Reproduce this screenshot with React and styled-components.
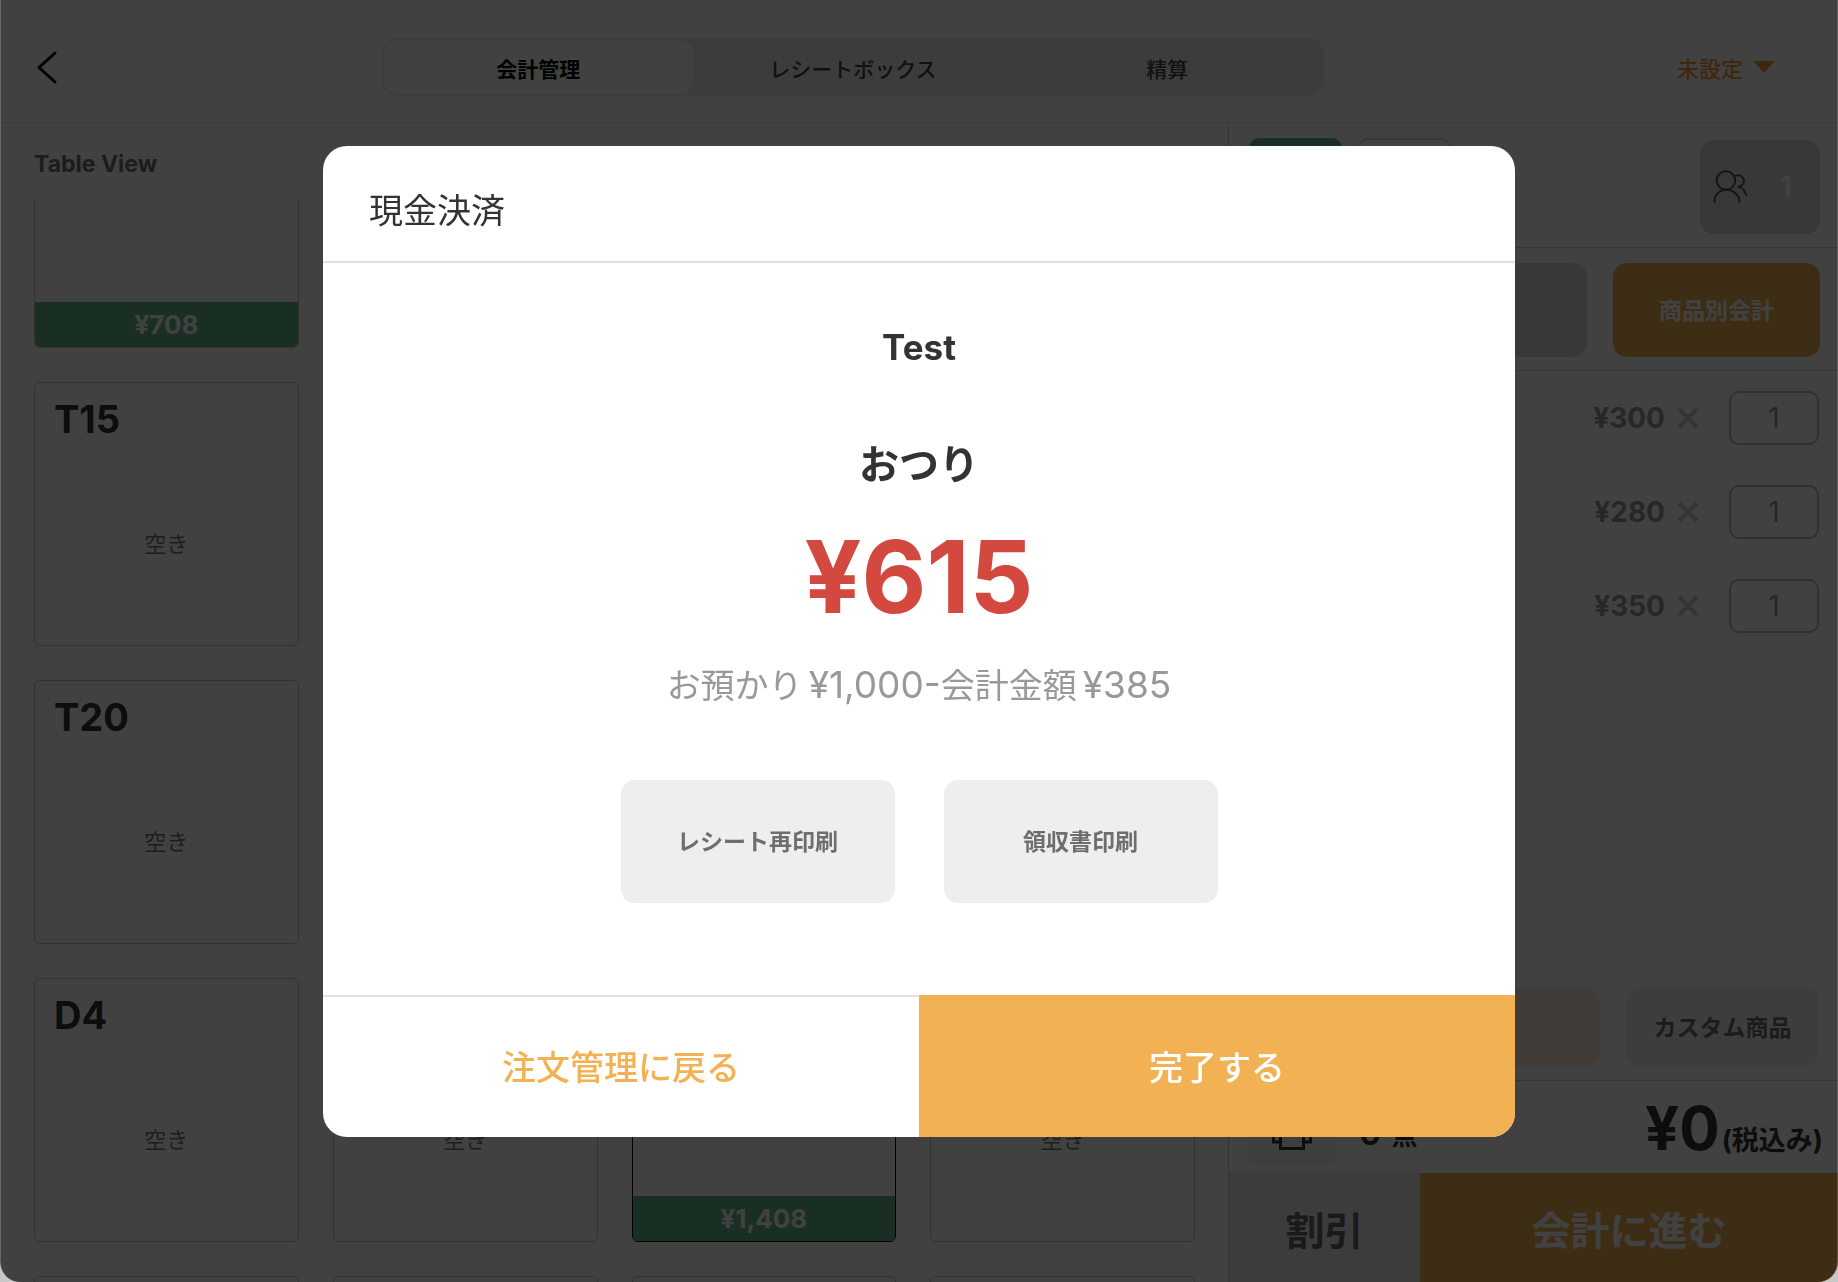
import { useLayoutEffect, useRef } from 'react';
import styled, { createGlobalStyle } from 'styled-components';

const GlobalStyle = createGlobalStyle`
    * {
        box-sizing: border-box;
    }
    body {
        margin: 0;
        background-color: #c8c8c8;
        color: #333333;
        font-family: Inter, "Noto Sans CJK JP", sans-serif;
    }
    button, input {
        font-family: inherit;
        color: inherit;
        margin: 0;
        padding: 0;
        border: none;
        background: none;
    }
    h1, h2, h3, p {
        margin: 0;
    }
`;

const Screen = styled.div`
    height: 100vh;
    display: flex;
    flex-direction: column;
    overflow: hidden;
    background-color: #ffffff;
    border-radius: 0 0 20px 20px;
`;

const Header = styled.header`
    height: 123px;
    flex-shrink: 0;
    display: grid;
    grid-template-columns: 3fr minmax(0, 942px) 4fr;
    align-items: center;
    padding: 12px 9px 0 3px;
    border-bottom: 1px solid #e6e6e6;
`;

const BackButton = styled.button`
    display: flex;
    padding-left: 32px;
`;

const Tabs = styled.nav`
    display: grid;
    grid-template-columns: 309px 1fr 309px;
    height: 58px;
    padding: 2px;
    border-radius: 16px;
    background-color: #ececec;
`;

const Tab = styled.button`
    padding-top: 2px;
    border-radius: 14px;
    background-color: ${({ $active }) => ($active ? '#ffffff' : 'transparent')};
    color: ${({ $active }) => ($active ? '#000000' : '#444444')};
    font-size: 21px;
    font-weight: ${({ $active }) => ($active ? 700 : 500)};
`;

const StaffMenu = styled.button`
    justify-self: end;
    display: flex;
    align-items: center;
    gap: 10px;
    margin-right: 54px;
    color: #f39a2c;
    font-size: 22px;
    font-weight: 500;
`;

const Main = styled.main`
    flex: 1;
    min-height: 0;
    display: grid;
    grid-template-columns: minmax(0, 1fr) 610px;
`;

const TableView = styled.section`
    min-height: 0;
    display: flex;
    flex-direction: column;
    h2 {
        padding: 26px 34px 20px;
        color: #6e6e6e;
        font-size: 23px;
        font-weight: 700;
        line-height: 30px;
    }
`;

const TableGrid = styled.div`
    flex: 1;
    min-height: 0;
    display: grid;
    grid-template-columns: repeat(4, 1fr);
    grid-auto-rows: 264px;
    gap: 34px;
    padding: 0 33px 34px 34px;
    overflow-y: auto;
    scrollbar-width: none;
`;

const TableCard = styled.article`
    display: flex;
    flex-direction: column;
    overflow: hidden;
    border: 1px solid ${({ $selected }) => ($selected ? '#000000' : '#c4c4c4')};
    border-radius: 6px;
    h3 {
        padding: 15px 19px 0;
        color: #333333;
        font-size: 38px;
        font-weight: 700;
        line-height: 42px;
    }
`;

const Vacant = styled.p`
    margin: auto 0 85px;
    color: #777777;
    font-size: 22px;
    line-height: 32px;
    text-align: center;
`;

const CardTotal = styled.p`
    margin-top: auto;
    background-color: #66ba8c;
    color: #ffffff;
    font-size: 26px;
    font-weight: 700;
    line-height: 45px;
    text-align: center;
`;

const Order = styled.aside`
    display: flex;
    flex-direction: column;
    border-left: 1px solid #d0d0d0;
`;

const OrderBar = styled.div`
    display: flex;
    align-items: flex-start;
    justify-content: flex-end;
    gap: ${({ $gap }) => $gap}px;
    padding: 15px 18px 13px 20px;
    border-bottom: 1px solid #cfcfcf;
`;

const Chip = styled.span`
    width: 93px;
    height: 40px;
    border: 2px solid ${({ $filled }) => ($filled ? '#66ba8c' : '#dddddd')};
    border-radius: 10px;
    background-color: ${({ $filled }) => ($filled ? '#66ba8c' : '#ffffff')};
`;

const Guests = styled.button`
    display: flex;
    align-items: center;
    justify-content: space-between;
    width: 120px;
    height: 94px;
    margin: 2px 0 0 auto;
    padding: 0 28px 0 13px;
    border-radius: 14px;
    background-color: #dcdcdc;
    color: #ffffff;
    font-size: 28px;
    font-weight: 700;
`;

const colors = {
    orange: ['#f2b254', '#ffffff'],
    gray: ['#dcdcdc', '#666666'],
    light: ['#eeeeee', '#6e6e6e'],
    peach: ['#fdeadb', '#f2b254'],
};

const Action = styled.button`
    width: ${({ $width }) => $width}px;
    height: ${({ $height }) => $height}px;
    padding-bottom: 3px;
    border-radius: 14px;
    background-color: ${({ $color }) => colors[$color][0]};
    color: ${({ $color }) => colors[$color][1]};
    font-size: 23px;
    font-weight: 700;
`;

const Items = styled.ul`
    flex: 1;
    margin: 0;
    padding: 0;
    list-style: none;
`;

const Item = styled.li`
    display: flex;
    align-items: center;
    justify-content: flex-end;
    height: 94px;
    padding-right: 19px;
    border-bottom: 1px solid #eeeeee;
    font-size: 28px;
    color: #999999;
    strong {
        margin-right: 12px;
        font-weight: 700;
    }
    svg {
        margin-right: 30px;
    }
    input {
        width: 90px;
        height: 54px;
        border: 2px solid #bdbdbd;
        border-radius: 10px;
        font-size: 28px;
        text-align: center;
    }
`;

const Extras = styled.div`
    display: flex;
    justify-content: flex-end;
    gap: 26px;
    padding: 0 19px 14px;
    border-bottom: 1px solid #cfcfcf;
`;

const Summary = styled.div`
    display: flex;
    align-items: center;
    height: 92px;
    padding: 0 15px 0 20px;
    color: #333333;
`;

const PrintButton = styled.button`
    display: flex;
    align-items: center;
    justify-content: center;
    width: 86px;
    height: 76px;
    border-radius: 8px;
    background-color: #f2f2f2;
`;

const Count = styled.span`
    margin-left: 24px;
    padding-top: 10px;
    font-size: 34px;
    font-weight: 600;
    small {
        margin-left: 10px;
        font-size: 26px;
    }
`;

const Total = styled.p`
    margin-left: auto;
    padding-top: 14px;
    font-size: 60px;
    font-weight: 700;
    line-height: 64px;
    small {
        margin-left: 2px;
        font-size: 27px;
    }
`;

const Checkout = styled.div`
    display: grid;
    grid-template-columns: 191px 1fr;
    height: 109px;
    button {
        font-size: 39px;
        font-weight: 700;
        background-color: #eaeaea;
        color: #666666;
    }
    button:last-child {
        background-color: #f2b254;
        color: #ffffff;
    }
`;

const Overlay = styled.div`
    position: fixed;
    inset: 0;
    z-index: 10;
    display: flex;
    align-items: center;
    justify-content: center;
    border: solid rgba(255, 255, 255, 0.2);
    border-width: 0 1px;
    border-radius: 0 0 20px 20px;
    background-color: rgba(0, 0, 0, 0.745);
`;

const ModalBase = styled.div`
    display: flex;
    flex-direction: column;
    width: 90%;
    max-width: 1192px;
    overflow: hidden;
    border-radius: 24px;
    background-color: #ffffff;
`;

ModalBase.Header = styled.header`
    padding: 41px 46px 26px;
    border-bottom: 2px solid #e0e0e0;
    h1 {
        font-size: 34px;
        font-weight: 400;
        line-height: 48px;
    }
`;

ModalBase.Content = styled.div`
    display: flex;
    flex-direction: column;
    align-items: center;
    padding: 60px 40px 92px;
`;

ModalBase.Footer = styled.footer`
    display: grid;
    grid-template-columns: 1fr 1fr;
    height: 142px;
    button {
        padding-bottom: 3px;
        border-top: 2px solid #e0e0e0;
        color: #f2b254;
        font-size: 34px;
        font-weight: 500;
    }
    button:last-child {
        border-color: #f2b254;
        background-color: #f2b254;
        color: #ffffff;
    }
`;

const TableName = styled.p`
    font-size: 35px;
    font-weight: 700;
    line-height: 48px;
`;

const ChangeLabel = styled.p`
    margin-top: 66px;
    font-size: 40px;
    font-weight: 700;
    line-height: 56px;
`;

const Change = styled.p`
    margin-top: 24px;
    color: #d4493f;
    font-size: 100px;
    font-weight: 700;
    line-height: 120px;
`;

const Received = styled.p`
    margin-top: 24px;
    color: #999999;
    font-size: 34px;
    line-height: 48px;
    span {
        margin-left: 6px;
        font-size: 37px;
    }
`;

const PrintActions = styled.div`
    display: flex;
    gap: 49px;
    margin-top: 70px;
`;

const cards = [
    { total: '¥708' }, {}, {}, {},
    { name: 'T15', vacant: true }, {}, {}, {},
    { name: 'T20', vacant: true }, {}, {}, {},
    { name: 'D4', vacant: true }, { vacant: true }, { total: '¥1,408', selected: true }, { vacant: true },
    {}, {}, {}, {},
];

const prices = ['¥300', '¥280', '¥350'];

function Tables() {
    const grid = useRef(null);

    useLayoutEffect(() => {
        grid.current.scrollTop = 115;
    }, []);

    return (
        <TableView>
            <h2>Table View</h2>
            <TableGrid ref={grid}>
                {cards.map((card, index) => (
                    <TableCard key={index} $selected={card.selected}>
                        {card.name && <h3>{card.name}</h3>}
                        {card.vacant && <Vacant>空き</Vacant>}
                        {card.total && <CardTotal>{card.total}</CardTotal>}
                    </TableCard>
                ))}
            </TableGrid>
        </TableView>
    );
}

function OrderPanel() {
    return (
        <Order>
            <OrderBar $gap={16}>
                <Chip $filled />
                <Chip />
                <Guests aria-label="人数">
                    <svg width="34" height="34" viewBox="0 0 34 34" fill="none" stroke="#555555" strokeWidth="2" strokeLinecap="round">
                        <circle cx="13" cy="10.5" r="9.3" />
                        <path d="M1.500 32c0-7 5-12.200 11.800-12.200S26.500 25 26.500 32" />
                        <path d="M23 5.500c4-1 8 1.500 8 5.500 0 3-2.500 5.500-6.500 5.500 4 .5 7.500 4 8.500 8.500" />
                    </svg>
                    1
                </Guests>
            </OrderBar>
            <OrderBar $gap={26}>
                <Action $width={207} $height={94} $color="gray" />
                <Action $width={207} $height={94} $color="orange">商品別会計</Action>
            </OrderBar>
            <Items>
                {prices.map((price) => (
                    <Item key={price}>
                        <strong>{price}</strong>
                        <svg width="22" height="22" viewBox="0 0 22 22" stroke="#cccccc" strokeWidth="4">
                            <path d="M2 2l18 18M20 2L2 20" />
                        </svg>
                        <input aria-label={price} defaultValue="1" />
                    </Item>
                ))}
            </Items>
            <Extras>
                <Action $width={193} $height={78} $color="peach" />
                <Action $width={193} $height={78} $color="light">カスタム商品</Action>
            </Extras>
            <Summary>
                <PrintButton aria-label="印刷">
                    <svg width="40" height="46" viewBox="0 0 40 46" fill="none" stroke="#333333" strokeWidth="3">
                        <path d="M8.500 14V3h23v11M8.500 38h-7V14h37v24h-7M8.500 28h23v16.500h-23z" />
                    </svg>
                </PrintButton>
                <Count>0<small>点</small></Count>
                <Total>¥0<small>(税込み)</small></Total>
            </Summary>
            <Checkout>
                <button>割引</button>
                <button>会計に進む</button>
            </Checkout>
        </Order>
    );
}

function Modal() {
    return (
        <Overlay>
            <ModalBase role="dialog" aria-labelledby="modal-title">
                <ModalBase.Header>
                    <h1 id="modal-title">現金決済</h1>
                </ModalBase.Header>
                <ModalBase.Content>
                    <TableName>Test</TableName>
                    <ChangeLabel>おつり</ChangeLabel>
                    <Change>¥615</Change>
                    <Received>お預かり<span>¥1,000-</span>会計金額<span>¥385</span></Received>
                    <PrintActions>
                        <Action $width={274} $height={123} $color="light">レシート再印刷</Action>
                        <Action $width={274} $height={123} $color="light">領収書印刷</Action>
                    </PrintActions>
                </ModalBase.Content>
                <ModalBase.Footer>
                    <button>注文管理に戻る</button>
                    <button>完了する</button>
                </ModalBase.Footer>
            </ModalBase>
        </Overlay>
    );
}

export default function App() {
    return (
        <>
            <GlobalStyle />
            <Screen>
                <Header>
                    <BackButton aria-label="戻る">
                        <svg width="26" height="36" viewBox="0 0 26 36" fill="none" stroke="#000000" strokeWidth="3" strokeLinecap="round" strokeLinejoin="round">
                            <path d="M20 4L4 18.500l16 14.500" />
                        </svg>
                    </BackButton>
                    <Tabs>
                        <Tab $active>会計管理</Tab>
                        <Tab>レシートボックス</Tab>
                        <Tab>精算</Tab>
                    </Tabs>
                    <StaffMenu>
                        未設定
                        <svg width="22" height="14" viewBox="0 0 22 14" fill="currentColor">
                            <path d="M0 1h22L11 13z" />
                        </svg>
                    </StaffMenu>
                </Header>
                <Main>
                    <Tables />
                    <OrderPanel />
                </Main>
            </Screen>
            <Modal />
        </>
    );
}
